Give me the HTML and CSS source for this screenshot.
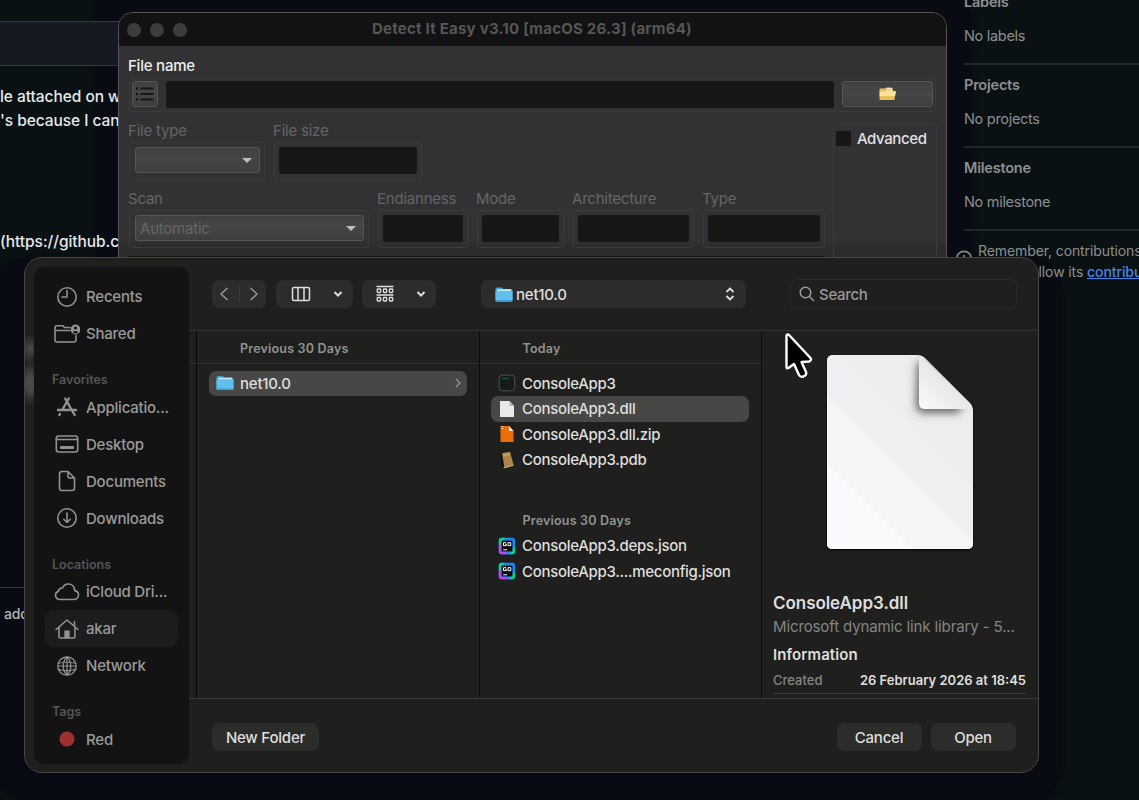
FILE: index.html
```html
<!DOCTYPE html>
<html lang="en">
<head>
<meta charset="UTF-8">
<title>Detect It Easy</title>
<link rel="stylesheet" href="styles.css">
</head>
<body>
  <!-- window shadows, below the page text -->
  <div class="shade shade-window"></div>
  <div class="shade shade-dialog"></div>

  <!-- issue page behind the windows -->
  <div class="page">
    <main class="issue">
      <div class="issue-head"></div>
      <p class="para first">le attached on windows</p>
      <p class="para">'s because I can't</p>
      <p class="para link-para">(https://github.com</p>
      <div class="issue-foot">add</div>
    </main>
    <aside class="meta">
      <section><h3>Labels</h3><p>No labels</p></section>
      <section><h3>Projects</h3><p>No projects</p></section>
      <section><h3>Milestone</h3><p>No milestone</p></section>
      <div class="remember">
        <svg class="info" viewBox="0 0 18 18" width="18" height="18"><circle cx="9" cy="9" r="7.6" fill="none" stroke="#85888b" stroke-width="1.6"/><path d="M9 5v2M9 8v5" stroke="#85888b" stroke-width="1.6"/></svg>
        <p>Remember, contributions<br>should follow its <a href="#">contributing</a></p>
      </div>
    </aside>
  </div>

  <div class="window">
    <header class="titlebar">
      <i class="dot"></i><i class="dot"></i><i class="dot"></i>
      <h1>Detect It Easy v3.10 [macOS 26.3] (arm64)</h1>
    </header>
    <div class="window-body">
      <label class="name-label">File name</label>
      <div class="group name-group">
        <button class="btn list-btn"><svg viewBox="0 0 20 16" width="20" height="16"><path d="M5.500 2.500h13M5.500 8h13M5.500 13.500h13" stroke="#171715" stroke-width="2"/><path d="M1 2.500h2M1 8h2M1 13.500h2" stroke="#171715" stroke-width="2.400"/></svg></button>
        <div class="field grow"></div>
        <button class="btn open-btn"><svg viewBox="0 0 18 14" width="18" height="14"><path d="M.5 2.500q0-1 1-1h4.500l1.500-1h5l1.500 1.500v2H17l-1.500 8.500q-.2.500-1 .5H1.500q-1 0-1-1z" fill="#e9bd5e"/><path d="M8 1h4.500l1 1.500H7.500z" fill="#e8e6dc"/><path d="M.7 4.500h5.500l1.500-1.200h5.600v1.200H17l-1 4.500H.7z" fill="#fbe19a"/></svg></button>
      </div>
      <div class="window-cols">
        <div class="window-left">
          <div class="line">
            <div class="cell w-type"><label>File type</label><div class="group"><div class="btn combo"></div></div></div>
            <div class="cell w-size"><label>File size</label><div class="group"><div class="field"></div></div></div>
          </div>
          <div class="line second">
            <div class="cell w-scan"><label>Scan</label><div class="group"><div class="btn combo">Automatic</div></div></div>
            <div class="cell w-endian"><label>Endianness</label><div class="group"><div class="field"></div></div></div>
            <div class="cell w-mode"><label>Mode</label><div class="group"><div class="field"></div></div></div>
            <div class="cell w-arch"><label>Architecture</label><div class="group"><div class="field"></div></div></div>
            <div class="cell w-kind"><label>Type</label><div class="group"><div class="field"></div></div></div>
          </div>
          <div class="results"></div>
        </div>
        <div class="group advanced"><i class="check"></i><span>Advanced</span></div>
      </div>
    </div>
  </div>

  <div class="dialog">
    <nav class="sidebar">
      <a class="item"><svg viewBox="0 0 26 24"><circle cx="13" cy="12" r="9.200"/><path d="M13 5.500V12H8"/></svg><span>Recents</span></a>
      <a class="item"><svg viewBox="0 0 26 24"><path d="M16 5.500H10.500L9 3.700H3q-2 0-2 2V18q0 2 2 2h17q2 0 2-2v-4.500M1 8.500h14.500"/><circle cx="21.500" cy="7.500" r="4.900" class="solid"/><circle cx="21.500" cy="6" r="1.600" class="hole"/><path d="M18.800 10.300q2.700-2.800 5.400 0l-1 1h-3.400z" class="hole"/></svg><span>Shared</span></a>
      <h2>Favorites</h2>
      <a class="item"><svg viewBox="0 0 26 24" class="bold"><path d="M14.800 3.500 8.200 15M11.200 3.500l8.500 15M4 15h11.500M18.500 15H22M6 19l-.6 1M20.300 19.200l.4.800"/></svg><span>Applicatio...</span></a>
      <a class="item"><svg viewBox="0 0 26 24"><rect x="2.300" y="4" width="21.400" height="16" rx="2.500"/><path d="M2.300 7.500h21.400"/><rect x="6" y="14" width="14" height="3" rx="1" class="solid"/></svg><span>Desktop</span></a>
      <a class="item"><svg viewBox="0 0 26 24"><path d="M14 2.500H8Q5.500 2.500 5.500 5v14q0 2.500 2.500 2.500h10q2.500 0 2.500-2.500V9zV7.500Q14 9 15.500 9h5"/></svg><span>Documents</span></a>
      <a class="item"><svg viewBox="0 0 26 24"><circle cx="13" cy="12" r="9.200"/><path d="M13 7v9.500M9.800 13.300l3.200 3.200 3.200-3.200"/></svg><span>Downloads</span></a>
      <h2>Locations</h2>
      <a class="item"><svg viewBox="0 0 26 24"><path d="M6.500 19.500h13c3 0 5-2 5-4.500 0-2.300-1.500-4-3.800-4.400C20.500 6.800 18 4 14.500 4c-3 0-5 1.600-6 4C6.200 7.800 4.700 9 4.400 11.300 2.500 12 1.500 13.300 1.500 15c0 2.600 2 4.500 5 4.500z"/></svg><span>iCloud Dri...</span></a>
      <a class="item active"><svg viewBox="0 0 26 24"><path d="M2 12.500 13 3l11 9.500M5 10.500v9q0 1.500 1.500 1.500h13q1.500 0 1.500-1.500v-9M20.500 9V4.500"/><path d="M10.300 21v-7.500h5.400V21z" class="solid"/></svg><span>akar</span></a>
      <a class="item"><svg viewBox="0 0 26 24" class="thin"><circle cx="13" cy="12" r="9.200"/><path d="M13 3c-5 4-5 14 0 18M13 3c5 4 5 14 0 18M4 9.500q9-3 18 0M4 15q9 3.500 18 0M13 3v18M4 12h18"/></svg><span>Network</span></a>
      <h2>Tags</h2>
      <a class="item"><svg viewBox="0 0 26 24"><circle cx="13" cy="12" r="7.500" class="red"/></svg><span>Red</span></a>
    </nav>

    <div class="panel">
      <div class="toolbar">
        <div class="tool nav-tool"><svg viewBox="0 0 10 16" width="10" height="16"><path d="M8.500 2 2 8l6.500 6"/></svg><i></i><svg viewBox="0 0 10 16" width="10" height="16"><path d="M1.500 2 8 8l-6.500 6"/></svg></div>
        <div class="tool view-tool"><svg viewBox="0 0 20 16" width="20" height="16"><rect x="1.500" y="1.500" width="17" height="13" rx="1.500"/><path d="M7 1.500v13M13 1.500v13"/></svg><svg class="chev" viewBox="0 0 10 8" width="10" height="8"><path d="m1.500 2 3.500 3.500L8.500 2"/></svg></div>
        <div class="tool sort-tool"><svg viewBox="0 0 18 18" width="18" height="18"><path d="M.5 1.500h17M.5 10h17"/><g stroke-width="1.300"><rect x="1.200" y="4" width="3.400" height="3.500" rx=".8"/><rect x="7.300" y="4" width="3.400" height="3.500" rx=".8"/><rect x="13.400" y="4" width="3.400" height="3.500" rx=".8"/><rect x="1.200" y="12.500" width="3.400" height="3.500" rx=".8"/><rect x="7.300" y="12.500" width="3.400" height="3.500" rx=".8"/><rect x="13.400" y="12.500" width="3.400" height="3.500" rx=".8"/></g></svg><svg class="chev" viewBox="0 0 10 8" width="10" height="8"><path d="m1.500 2 3.500 3.500L8.500 2"/></svg></div>
        <div class="tool path-tool"><svg class="folder" viewBox="0 0 18 15" width="18" height="15"><use href="#folder"/></svg><span>net10.0</span><svg class="updown" viewBox="0 0 10 14" width="10" height="14"><path d="m1.500 5 3.500-3.500L8.500 5M1.500 9 5 12.500 8.500 9"/></svg></div>
        <div class="search"><svg viewBox="0 0 16 16" width="16" height="16"><circle cx="6.500" cy="6.500" r="5.300"/><path d="m10.500 10.500 4.500 4.500"/></svg><span>Search</span></div>
      </div>

      <div class="browser">
        <div class="col">
          <h4>Previous 30 Days</h4>
          <ul>
            <li class="selected"><svg viewBox="0 0 18 18"><g transform="translate(0 1.500)"><use href="#folder"/></g></svg><span>net10.0</span><svg class="more" viewBox="0 0 6 10"><path d="m1 1 4 4-4 4"/></svg></li>
          </ul>
        </div>
        <div class="col">
          <h4>Today</h4>
          <ul>
            <li><svg viewBox="0 0 18 18"><rect x="1.200" y="1.200" width="15.600" height="15.600" rx="3.500" fill="#171a1c" stroke="#4c5050"/><path d="M4 4.500h7" stroke="#21643c" stroke-width="1.500" stroke-dasharray="1.500 .6"/></svg><span>ConsoleApp3</span></li>
            <li class="selected"><svg viewBox="0 0 18 18"><path d="M2 1h9.500L16 6v11H2z" fill="#e9e9e9"/><path d="M11.500 1v5H16z" fill="#b6b6b6"/></svg><span>ConsoleApp3.dll</span></li>
            <li><svg viewBox="0 0 18 18"><path d="M2.500 1h8.500l4.500 5v11h-13z" fill="#ea6d09"/><path d="M11 1v5h4.500z" fill="#fff0df"/><path d="M4.500 1v4" stroke="#f9c07d" stroke-width="2" stroke-dasharray="1 1"/></svg><span>ConsoleApp3.dll.zip</span></li>
            <li><svg viewBox="0 0 18 18"><path d="m2 3 2-1 3 14.500-3 .5z" fill="#111213"/><path d="M4 2.200 12 .8l3.500 13-9 3z" fill="#ad854c"/><path d="m5.500 17 10-2.700" stroke="#d2bd97"/><path d="m5 3 6.500-1 .6 2.200-6.500 1.300z" fill="#c79b5e"/></svg><span>ConsoleApp3.pdb</span></li>
          </ul>
          <h5>Previous 30 Days</h5>
          <ul>
            <li><svg viewBox="0 0 18 18"><use href="#goland"/></svg><span>ConsoleApp3.deps.json</span></li>
            <li><svg viewBox="0 0 18 18"><use href="#goland"/></svg><span>ConsoleApp3....meconfig.json</span></li>
          </ul>
        </div>
        <div class="col preview">
          <svg class="doc" viewBox="0 0 146 194" width="146" height="194">
            <defs>
              <clipPath id="sheet"><path d="M6 0h84q5 0 8 3l45 45q3 3 3 8v132q0 6-6 6H6q-6 0-6-6V6q0-6 6-6z"/></clipPath>
              <linearGradient id="curl" x1="0" y1="1" x2=".55" y2=".45"><stop offset="0" stop-color="#fbfbfd"/><stop offset="1" stop-color="#e6e6e6"/></linearGradient>
              <filter id="soft" x="-40%" y="-40%" width="180%" height="180%"><feGaussianBlur stdDeviation="4.500"/></filter>
            </defs>
            <g clip-path="url(#sheet)">
              <path d="M0 0h146v194H0z" fill="#ededec"/>
              <path d="M0 0h15l131 131v63H0z" fill="#f0f0f3"/>
              <path d="M0 42l146 146v6H0z" fill="#f5f5f4"/>
              <path d="M0 108l86 86H0z" fill="#fafafc"/>
              <path d="M90 8l6-2 40 48-6 4H97q-8 0-8-8z" fill="#666" filter="url(#soft)"/>
            </g>
            <path d="M92 2q4 1 6 3l44 44q2 3 2 5H98q-6 0-6-6z" fill="url(#curl)"/>
          </svg>
          <div class="details">
            <h3>ConsoleApp3.dll</h3>
            <p class="kind">Microsoft dynamic link library - 5...</p>
            <h6>Information</h6>
            <div class="fact"><span>Created</span><b>26 February 2026 at 18:45</b></div>
          </div>
        </div>
      </div>

      <footer class="actions">
        <button class="new">New Folder</button>
        <button>Cancel</button>
        <button>Open</button>
      </footer>
    </div>
  </div>

  <svg class="cursor" viewBox="0 0 28 46" width="28" height="46"><path d="M1.500 2.500V34q0 2 2 1l5.500-4 5 11q1.500 2.500 4.500 1.500 3.500-1.500 2.500-4.500L16.500 29l7.500-.5q3-1 1.500-3.500L4 2q-2-1.500-2.500.5z" fill="#000" stroke="#fff" stroke-width="2.400" stroke-linejoin="round"/></svg>

  <!-- shared icons -->
  <svg class="defs" width="0" height="0">
    <symbol id="folder" viewBox="0 0 18 15" width="18" height="15"><path d="M.5 2q0-1.500 1.500-1.500h5L8.500 2H16q1.500 0 1.500 1.500v9.500q0 1.500-1.500 1.500H2Q.5 14.500.5 13z" fill="#3b9fd1"/><path d="M2 2.300h14v2H2z" fill="#c4e9f8"/><path d="M.5 4h17v9q0 1.500-1.500 1.500H2Q.5 14.500.5 13z" fill="#5fc0ee"/><path d="M.5 13h17q0 1.500-1.500 1.500H2Q.5 14.500.5 13z" fill="#3c9bcf"/></symbol>
    <symbol id="goland" viewBox="0 0 18 18">
      <rect x=".8" y=".8" width="16.400" height="16.400" rx="3" fill="#1689f5"/>
      <path d="M3.500.8H7L3.500 8 .8 10V3.500Q.8.800 3.500.8zM17.200 10v4.500q0 2.700-2.700 2.700H11l3-5z" fill="#10cf91"/>
      <path d="M.8 9 4 6l1 8 7 3.200H3.500Q.8 17.200.8 14.500z" fill="#b548f4"/>
      <path d="M3.600 3.600h10.800v10.800H3.600z" fill="#050505"/>
      <path d="M8.300 5.700H5.500v3h2.800V7.300H7.200M10 5.700h2.800v3H10zM5.200 12.800h4" fill="none" stroke="#fff"/>
    </symbol>
  </svg>
</body>
</html>
```
FILE: styles.css
```css
* { box-sizing: border-box; }
html, body {
  margin: 0;
  padding: 0;
  overflow: hidden;
  font-family: Inter, "Liberation Sans", sans-serif;
  font-size: 15px;
  background: #0a1112;
}
body {
  position: relative;
  width: 1139px;
  height: 800px;
  letter-spacing: -.22px;
}
h1, h2, h3, h4, h5, h6, p, ul { margin: 0; padding: 0; }
li { list-style: none; }
button { font: inherit; letter-spacing: inherit; }

.shade {
  position: absolute;
  background: #080b13;
  box-shadow: 0 0 4px 3px #080b13;
}
.shade-window {
  left: 98px;
  top: -20px;
  width: 871px;
  height: 330px;
  border-radius: 0 40px 0 0;
}
.shade-dialog {
  left: -2px;
  top: 260px;
  width: 1062px;
  height: 540px;
  border-radius: 30px;
}

/* Page behind */
.page {
  position: relative;
  display: flex;
  height: 800px;
  overflow: hidden;
  white-space: nowrap;
}
.issue {
  width: 964px;
  flex: none;
  padding-top: 21px;
  color: #e6e8ea;
  font-weight: 500;
  font-size: 15.5px;
}
.issue-head {
  height: 45px;
  background: #151922;
  border: solid #303841;
  border-width: 1px 0;
  width: 600px;
}
.para {
  line-height: 24px;
  letter-spacing: -.05px;
}
.para.first { margin-top: 19px; }
.link-para { margin-top: 97px; }
.issue-foot {
  margin-top: 333px;
  border-top: 1px solid #303841;
  padding: 17px 4px;
  font-size: 14px;
  color: #b6b8ba;
  width: 600px;
}
.meta {
  width: 175px;
  flex: none;
  color: #8c8f91;
  font-size: 14.500px;
  letter-spacing: -.3px;
}
.meta section {
  display: flow-root;
  height: 83px;
  border-bottom: 2px solid #20272d;
}
.meta section:first-child { height: 65px; }
.meta section:first-child h3 { padding-top: 0; margin-top: -7px; }
.meta h3 {
  font-size: 14.500px;
  line-height: 18px;
  padding-top: 11px;
  font-weight: 600;
  letter-spacing: -.22px;
}
.meta p {
  line-height: 20px;
  margin-top: 15px;
}
.remember {
  display: flex;
  margin-left: -9px;
}
.remember .info { flex: none; margin-top: 19px; }
.meta .remember p {
  margin: 9px 0 0 5px;
  line-height: 21px;
  font-size: 14px;
  letter-spacing: -.1px;
}
.remember a { color: #4386e8; font-weight: 500; }

/* Main window */
.window {
  position: absolute;
  left: 118px;
  top: 12px;
  width: 829px;
  height: 300px;
  border: 1px solid #555552;
  border-radius: 15px;
  background: linear-gradient(#323234 226px, #2c2c2a 234px);
  overflow: hidden;
  color: #656563;
}
.titlebar {
  height: 33px;
  display: flex;
  align-items: center;
  gap: 9px;
  padding-left: 8px;
  background: #121214;
}
.dot {
  width: 14px;
  height: 14px;
  border-radius: 50%;
  background: #3d3d3f;
}
.titlebar h1 {
  flex: 1;
  padding: 0 69px 2px 0;
  margin-left: -9px;
  text-align: center;
  font-size: 15px;
  font-weight: 700;
  letter-spacing: .23px;
  color: #565654;
}
.window-body { padding: 10px 9px 0 9px; }
.name-label {
  display: block;
  color: #eee;
  line-height: 20px;
  font-weight: 500;
}
.group {
  border: 1px solid #3b3b3c;
  border-radius: 3px;
}
.name-group {
  display: flex;
  margin: 2px 0 0 1px;
  height: 34px;
  padding: 2px 2px;
  gap: 8px;
  width: 807px;
}
.btn {
  border: 1px solid #555553;
  border-radius: 3px;
  background: linear-gradient(#40403f, #464648 45%, #3e3e3c);
  display: flex;
  align-items: center;
  justify-content: center;
  padding: 0;
}
.list-btn { width: 26px; height: 26px; }
.open-btn { width: 91px; height: 26px; }
.field {
  height: 27px;
  background: #171715;
  border-radius: 2px;
}
.grow { flex: 1; }
.window-cols {
  display: flex;
  justify-content: space-between;
}
.window-left { padding-top: 8px; }
.line { display: flex; gap: 8px; }
.line.second { margin-top: 8px; }
.cell label {
  display: block;
  line-height: 21px;
  margin-bottom: 1px;
}
.cell .group {
  margin-left: 1px;
  height: 38px;
  padding: 4px;
}
.combo {
  height: 26px;
  margin: 0 0 0 1px;
  justify-content: space-between;
  padding: 0 7px 0 4px;
}
.combo::after {
  content: "";
  margin-left: auto;
  border: 5px solid transparent;
  border-top-color: #bebebc;
  border-bottom: 0;
}
.w-type { width: 137px; }
.w-size { width: 149px; }
.w-scan { width: 241px; }
.w-endian { width: 91px; }
.w-mode { width: 88px; }
.w-arch { width: 122px; }
.w-kind { width: 123px; }
.results {
  margin-top: 8px;
  height: 40px;
  width: 697px;
  background: #171715;
}
.advanced {
  margin-top: 11px;
  width: 104px;
  height: 180px;
  padding: 5px 0 0 2px;
  display: flex;
  gap: 6px;
  color: #e0e0e0;
  font-weight: 500;
  letter-spacing: -.4px;
}
.check { width: 15px; height: 15px; margin-top: 2px; background: #171715; }

/* Open dialog */
.dialog {
  position: absolute;
  left: 24px;
  top: 257px;
  width: 1015px;
  height: 516px;
  border: 1px solid #454543;
  border-radius: 18px;
  background:
    radial-gradient(closest-side, #4a4a49, transparent) -5px 76px / 20px 30px no-repeat,
    radial-gradient(closest-side, #4a4a49 30%, transparent) -5px 102px / 20px 46px no-repeat,
    #1f1f1e;
  display: flex;
  overflow: hidden;
  color: #dededc;
}
.sidebar {
  width: 155px;
  margin: 9px 0 8px 9px;
  padding: 11px 11px 0;
  border-radius: 10px;
  background: #131314;
  color: #9a9a98;
  white-space: nowrap;
}
.item {
  height: 37px;
  display: flex;
  align-items: center;
  gap: 6px;
  padding-left: 9px;
  border-radius: 9px;
  font-weight: 500;
}
.item.active { background: #1c1c1e; }
.item svg {
  width: 26px;
  height: 24px;
  flex: none;
  fill: none;
  stroke: #92928f;
  stroke-width: 1.600;
  stroke-linecap: round;
  stroke-linejoin: round;
}
.item svg .solid { fill: #92928f; stroke: none; }
.item svg .hole { fill: #131314; stroke: none; }
.item svg .red { fill: #a02f30; stroke: none; }
.item svg.bold { stroke-width: 2.400; }
.item svg.thin { stroke-width: 1.200; }
.sidebar h2 {
  height: 36.500px;
  padding: 18px 0 0 7px;
  font-size: 12.500px;
  line-height: 19px;
  font-weight: 600;
  letter-spacing: 0;
  color: #555553;
}
.panel {
  flex: 1;
  min-width: 0;
  display: flex;
  flex-direction: column;
}
.toolbar {
  height: 73px;
  flex: none;
  display: flex;
  align-items: center;
  padding-left: 23px;
  border-bottom: 1px solid #343433;
}
.toolbar svg {
  fill: none;
  stroke: #dededc;
  stroke-width: 1.500;
  flex: none;
}
.tool {
  height: 28px;
  border-radius: 7px;
  background: #2c2c2b;
  display: flex;
  align-items: center;
  font-weight: 500;
}
.toolbar .nav-tool svg { stroke: #969694; }
.nav-tool { width: 54px; padding: 0 7px; justify-content: space-between; }
.nav-tool i { width: 1px; height: 16px; background: #3b3b3a; }
.view-tool { width: 77px; margin-left: 10px; padding: 0 10px 0 15px; justify-content: space-between; }
.sort-tool { width: 74px; margin-left: 9px; padding: 0 10px 0 14px; justify-content: space-between; }
.toolbar .chev { stroke-width: 2; }
.path-tool { width: 265px; margin-left: 45px; padding: 0 11px 0 14px; }
.path-tool span { margin-left: 3px; }
.path-tool .updown { margin-left: auto; stroke-width: 1.800; }
.toolbar .folder, .toolbar .folder * { stroke: none; }
.search {
  width: 227px;
  height: 30px;
  margin-left: 44px;
  padding-left: 8px;
  border: 1px solid #2b2b2c;
  border-radius: 7px;
  display: flex;
  align-items: center;
  gap: 4px;
  color: #9a9a98;
  font-weight: 500;
  letter-spacing: -.3px;
}
.search svg { stroke: #9a9a98; }
.browser {
  height: 367px;
  display: flex;
  padding-left: 7px;
  background: linear-gradient(#2f2f32, #2f2f32) 0 32px / 573px 1px no-repeat;
}
.col {
  width: 282.500px;
  flex: none;
  border-left: 1px solid #050507;
  white-space: nowrap;
}
.col + .col { border-color: #0c0c0e; }
.col h4, .col h5 {
  font-size: 12.500px;
  font-weight: 600;
  color: #929290;
  letter-spacing: .2px;
  padding-left: 43px;
}
.col h4 { height: 39.500px; line-height: 35px; }
.col h5 { margin-top: 36px; height: 24.500px; line-height: 23px; }
.col li {
  height: 25.500px;
  margin: 0 12px;
  padding: 0 6px 0 7px;
  display: flex;
  align-items: center;
  gap: 6px;
  border-radius: 7px;
  font-weight: 500;
  letter-spacing: -.3px;
}
.col:first-child li { letter-spacing: -.22px; }
.col + .col li { margin-left: 11.500px; }
.col li svg { width: 18px; height: 18px; flex: none; }
.col li.selected { background: #474746; }
.col li svg.more {
  width: 6px;
  height: 10px;
  margin-left: auto;
  fill: none;
  stroke: #939391;
  stroke-width: 1.300;
}
.preview {
  flex: 1;
  width: auto;
  min-width: 0;
  padding: 24px 12px 0 11px;
}
.doc {
  display: block;
  margin: 0 auto;
  filter: drop-shadow(0 1px 1px #000);
}
.details { margin-top: 42px; letter-spacing: 0; }
.details h3 { font-size: 17px; line-height: 24px; font-weight: 600; letter-spacing: -.05px; }
.kind { line-height: 24px; color: #858583; letter-spacing: -.12px; }
.details h6 { font-size: 15px; line-height: 31px; font-weight: 600; letter-spacing: .1px; }
.fact {
  display: flex;
  justify-content: space-between;
  height: 24px;
  line-height: 21px;
  font-size: 13px;
  color: #858583;
  border-bottom: 1px solid #3a3a39;
}
.fact span { font-weight: 500; }
.fact b { font-weight: 600; color: #dededc; }
.actions {
  flex: 1;
  display: flex;
  align-items: center;
  gap: 9px;
  padding: 2px 22.500px 0 23px;
  border-top: 1px solid #3a3a39;
}
.actions button {
  width: 85px;
  height: 28px;
  border: 0;
  border-radius: 7px;
  background: #2c2c2b;
  color: #dededc;
  font-weight: 500;
  padding: 1px 0 0;
}
.actions .new { width: 107px; margin-right: auto; }

/* Mouse pointer */
.cursor {
  position: absolute;
  left: 785px;
  top: 333px;
}
.defs { position: absolute; }
```
